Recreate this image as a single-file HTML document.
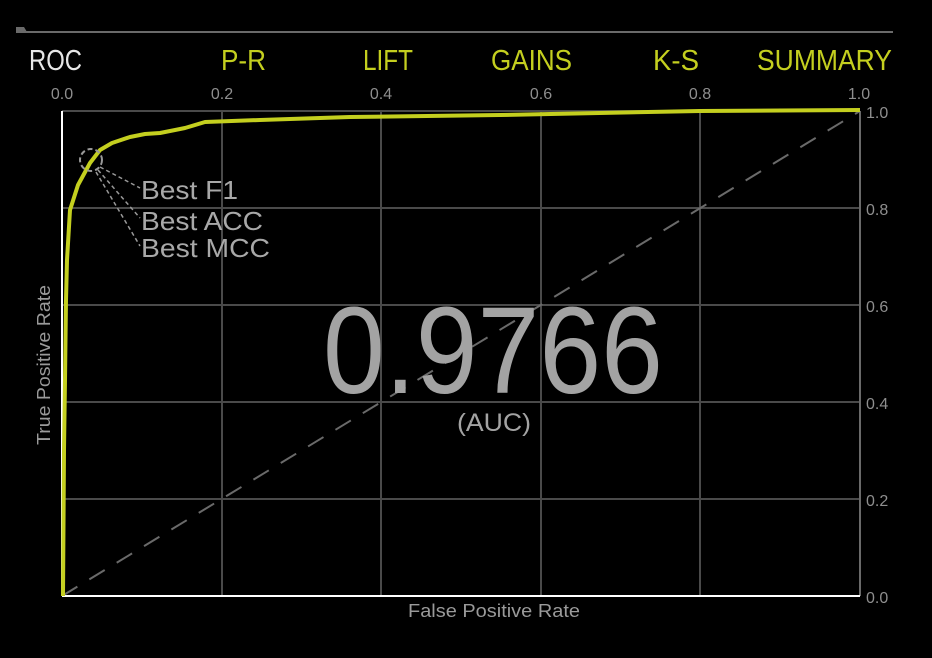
<!DOCTYPE html>
<html><head><style>html,body{margin:0;padding:0;background:#000;}svg{display:block}text{font-family:"Liberation Sans",sans-serif}</style></head>
<body>
<svg width="932" height="658" viewBox="0 0 932 658" xmlns="http://www.w3.org/2000/svg">
<rect width="932" height="658" fill="#000"/>
<rect x="16" y="31" width="877" height="2" fill="#6a6a6a"/>
<path d="M16 27 H24 L27 32 H16 Z" fill="#6a6a6a"/>
<g font-size="29" fill="#c4cf1f">
<text x="29" y="70" fill="#e6e6e6" textLength="53" lengthAdjust="spacingAndGlyphs">ROC</text>
<text x="221" y="70" textLength="45" lengthAdjust="spacingAndGlyphs">P-R</text>
<text x="363" y="70" textLength="50" lengthAdjust="spacingAndGlyphs">LIFT</text>
<text x="491" y="70" textLength="81" lengthAdjust="spacingAndGlyphs">GAINS</text>
<text x="653" y="70" textLength="46" lengthAdjust="spacingAndGlyphs">K-S</text>
<text x="757" y="70" textLength="135" lengthAdjust="spacingAndGlyphs">SUMMARY</text>
</g>
<g font-size="16" fill="#8e8e8e" text-anchor="middle">
<text x="62" y="99">0.0</text><text x="222" y="99">0.2</text><text x="381" y="99">0.4</text><text x="541" y="99">0.6</text><text x="700" y="99">0.8</text><text x="859" y="99">1.0</text>
</g>
<g font-size="16" fill="#8e8e8e">
<text x="866" y="118">1.0</text><text x="866" y="215">0.8</text><text x="866" y="312">0.6</text><text x="866" y="409">0.4</text><text x="866" y="506">0.2</text><text x="866" y="603">0.0</text>
</g>
<g stroke="#4a4a4a" stroke-width="2" fill="none">
<path d="M62 111 H860 M62 208 H860 M62 305 H860 M62 402 H860 M62 499 H860"/>
<path d="M222 111 V596 M381 111 V596 M541 111 V596 M700 111 V596"/>
<path d="M860 111 V596" stroke="#6a6a6a"/>
</g>
<path d="M62 596 L860 111" stroke="#6a6a6a" stroke-width="2" stroke-dasharray="18 14"/>
<g fill="#a3a3a3">
<text x="323" y="393" font-size="123" textLength="340" lengthAdjust="spacingAndGlyphs">0.9766</text>
<text x="457" y="431" font-size="25" textLength="74" lengthAdjust="spacingAndGlyphs">(AUC)</text>
</g>
<path d="M62 596 V111 M62 596 H860" stroke="#fff" stroke-width="2" fill="none"/>
<polyline fill="none" stroke="#c4cf1f" stroke-width="4" stroke-linejoin="round" points="63,596 64,450 65,380 66,300 67,260 70,210 78,185 90,163 100,150 112,143 130,137 145,134 160,133 185,128 205,122 260,120 350,117 500,115 700,111 860,110"/>
<circle cx="91" cy="160" r="11" fill="none" stroke="#999" stroke-width="2" stroke-dasharray="5 3"/>
<g stroke="#999" stroke-width="1.5" stroke-dasharray="4 3">
<path d="M100 167 L140 188 M98 170 L140 218 M96 172 L140 246"/>
</g>
<g font-size="26" fill="#a8a8a8">
<text x="141" y="199" textLength="97" lengthAdjust="spacingAndGlyphs">Best F1</text>
<text x="141" y="230" textLength="122" lengthAdjust="spacingAndGlyphs">Best ACC</text>
<text x="141" y="257" textLength="129" lengthAdjust="spacingAndGlyphs">Best MCC</text>
</g>
<text x="408" y="617" font-size="18" fill="#9a9a9a" textLength="172" lengthAdjust="spacingAndGlyphs">False Positive Rate</text>
<text transform="translate(50,445) rotate(-90)" font-size="18" fill="#9a9a9a" textLength="160" lengthAdjust="spacingAndGlyphs">True Positive Rate</text>
</svg>
</body></html>
